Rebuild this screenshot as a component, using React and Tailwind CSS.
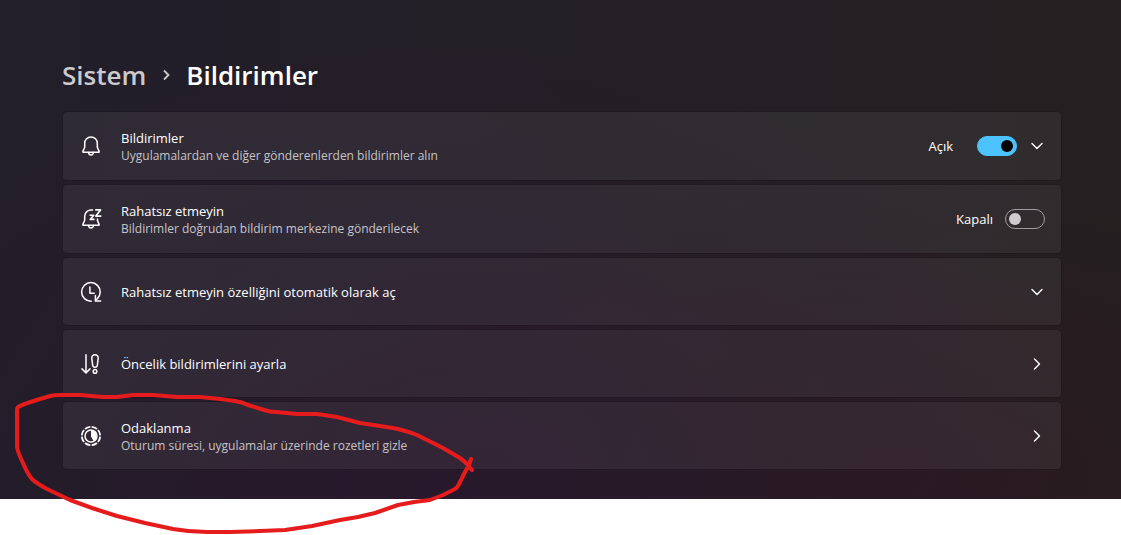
import React, { useState } from 'react';

const Icon = ({ children }) => (
  <svg
    className="size-5 shrink-0 overflow-visible"
    viewBox="0 0 20 20"
    fill="none"
    stroke="currentColor"
    strokeWidth="1.5"
    strokeLinecap="round"
    strokeLinejoin="round"
    aria-hidden="true"
  >
    {children}
  </svg>
);

const BellIcon = () => (
  <Icon>
    <path d="M10 .9a6.3 6.3 0 0 0-6.3 6.3v4.1L1.9 15.4c-.2.5.1.9.6.9h15c.5 0 .8-.4.6-.9l-1.8-4.1V7.2A6.3 6.3 0 0 0 10 .9Z" />
    <path d="M7.6 16.5a2.4 2.4 0 0 0 4.8 0" />
  </Icon>
);

const SnoozeIcon = () => (
  <Icon>
    <path d="M11.4 1.1A6.3 6.3 0 0 0 3.7 7.2v4.1l-1.8 4.1c-.2.5.1.9.6.9h15c.5 0 .8-.4.6-.9l-1.6-3.8V10" />
    <path d="M7.6 16.5a2.4 2.4 0 0 0 4.8 0" />
    <path d="M14.8.9h4.8l-4.8 6.2h5M9.2 6.2h3.5L9.2 10.4h3.7" strokeWidth="1.6" />
  </Icon>
);

const ClockIcon = () => (
  <Icon>
    <path d="M10.2 19.2A9.3 9.3 0 1 1 19.2 10c0 2.7-1 4.8-2.8 6.6L14.6 18.6" />
    <path d="M8.9 5v6.3h4.3" />
    <path d="M14.4 13.4v5.6h5.2" />
  </Icon>
);

const PriorityIcon = () => (
  <Icon>
    <path d="M5 .8v18M1 14.9l4 4 4-4" />
    <path d="M14 .8c-2 0-3.4 1.4-3.2 3.5l.9 7c.2 1.3 1.1 2 2.3 2s2.1-.7 2.3-2l.9-7C17.4 2.2 16 .8 14 .8Z" />
    <circle cx="14" cy="17.4" r="1.8" />
  </Icon>
);

const FocusIcon = () => (
  <Icon>
    <circle cx="10" cy="10" r="9.2" pathLength="80" strokeDasharray="8 2" strokeDashoffset="-1" strokeLinecap="butt" strokeWidth="1.8" />
    <circle cx="10" cy="10" r="6" />
    <path d="M10 4.5a5.5 5.5 0 0 1 2.5 10.4L10 10.500Z" fill="currentColor" stroke="none" />
  </Icon>
);

const Chevron = ({ down }) => (
  <svg
    className="size-4 shrink-0"
    viewBox="0 0 16 16"
    fill="none"
    stroke="currentColor"
    strokeWidth="1.4"
    strokeLinecap="round"
    strokeLinejoin="round"
    aria-hidden="true"
  >
    <path d={down ? 'M3 5.5l5 5 5-5' : 'M5.5 3l5 5-5 5'} />
  </svg>
);

const Card = ({ icon, title, description, id, className, children }) => (
  <li
    className={`flex items-center gap-5 rounded-[5px] border border-black/10 bg-white/6 bg-clip-padding pl-[18px] pr-4 ${className}`}
  >
    {icon}
    <div className="flex-1">
      <h2 id={id} className="text-[13px] leading-5 text-white">
        {title}
      </h2>
      {description && <p className="text-[12px] leading-4 text-[#c6c3c9]">{description}</p>}
    </div>
    {children}
  </li>
);

const Toggle = ({ labelledBy, checked, onChange }) => (
  <input
    type="checkbox"
    role="switch"
    aria-labelledby={labelledBy}
    checked={checked}
    onChange={(e) => onChange(e.target.checked)}
    className="flex h-5 w-10 shrink-0 cursor-pointer appearance-none items-center rounded-full border border-[#a09da1] px-[3px] before:size-3 before:rounded-full before:bg-[#cfcccf] checked:justify-end checked:border-[#4cc2ff] checked:bg-[#4cc2ff] checked:before:bg-black"
  />
);

const App = () => {
  const [notifications, setNotifications] = useState(true);
  const [doNotDisturb, setDoNotDisturb] = useState(false);

  return (
    <div className="relative min-h-screen bg-white font-['Open_Sans','Noto_Sans',sans-serif]">
      <main className="bg-[radial-gradient(ellipse_at_40%_100%,#28182b_0%,transparent_65%),radial-gradient(ellipse_at_80%_95%,#2a1a20_0%,transparent_45%),linear-gradient(to_right,#221e2a_0%,#231f25_60%,#241f20_100%)] pt-[57px] pr-[59px] pb-[29px] pl-[62px] text-white">
        <nav className="flex items-center gap-3 text-[26px] leading-9 font-semibold" aria-label="Konum">
          <a href="#sistem" className="text-[#cbcacd]">
            Sistem
          </a>
          <span className="px-1 text-[#cbcacd]">
            <svg className="h-3 w-2" viewBox="0 0 8 12" fill="none" stroke="currentColor" strokeWidth="1.8" aria-hidden="true">
              <path d="M2 1.5L6.5 6L2 10.5" />
            </svg>
          </span>
          <h1>Bildirimler</h1>
        </nav>

        <ul className="mt-[18px] space-y-[3px]">
          <Card
            className="h-[70px]"
            icon={<BellIcon />}
            id="notifications"
            title="Bildirimler"
            description="Uygulamalardan ve diğer gönderenlerden bildirimler alın"
          >
            <div className="flex items-center gap-3">
              <span className="mr-3 text-[13px] leading-5">{notifications ? 'Açık' : 'Kapalı'}</span>
              <Toggle labelledBy="notifications" checked={notifications} onChange={setNotifications} />
              <button type="button" aria-label="Genişlet">
                <Chevron down />
              </button>
            </div>
          </Card>

          <Card
            className="h-[70px]"
            icon={<SnoozeIcon />}
            id="dnd"
            title="Rahatsız etmeyin"
            description="Bildirimler doğrudan bildirim merkezine gönderilecek"
          >
            <div className="flex items-center gap-3">
              <span className="text-[13px] leading-5">{doNotDisturb ? 'Açık' : 'Kapalı'}</span>
              <Toggle labelledBy="dnd" checked={doNotDisturb} onChange={setDoNotDisturb} />
            </div>
          </Card>

          <Card className="h-[69px]" icon={<ClockIcon />} id="auto" title="Rahatsız etmeyin özelliğini otomatik olarak aç">
            <button type="button" aria-labelledby="auto">
              <Chevron down />
            </button>
          </Card>

          <Card className="h-[69px]" icon={<PriorityIcon />} id="priority" title="Öncelik bildirimlerini ayarla">
            <a href="#oncelik" aria-labelledby="priority">
              <Chevron />
            </a>
          </Card>

          <Card
            className="h-[69px]"
            icon={<FocusIcon />}
            id="focus"
            title="Odaklanma"
            description="Oturum süresi, uygulamalar üzerinde rozetleri gizle"
          >
            <a href="#odaklanma" aria-labelledby="focus">
              <Chevron />
            </a>
          </Card>
        </ul>
      </main>

      {/* hand-drawn marker around the focus row */}
      <svg
        className="pointer-events-none absolute top-[390px] left-0 h-[145px] w-[480px]"
        viewBox="0 390 480 145"
        fill="none"
        stroke="#e61c1c"
        strokeWidth="4"
        strokeLinecap="round"
        strokeLinejoin="round"
        aria-hidden="true"
      >
        <path d="M471 459L469 465L465 472L460 482Q458 487 455 489L443 495L430 500L414 502L398 505L375 513L358 517L340 520L312 526L285 530L260 531L230 532H207Q190 532 173 529L145 523L117 516L92 508L70 500L47 489Q36 483 32 479Q27 473 23 463Q18 453 17 447V410Q17 407 20 406Q26 403 50 396Q54 395 60 395H80L103 397H117L133 395H153L177 397H200L220 399L235 401Q242 402 248 405L264 410Q270 412 276 412L297 414H317L337 417L360 423L393 428Q404 430 417 435L443 448L460 458Q466 462 469 467L472 470" />
      </svg>
    </div>
  );
};

export default App;
